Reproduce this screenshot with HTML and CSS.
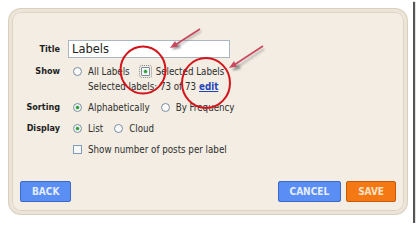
FILE: index.html
```html
<!DOCTYPE html>
<html>
<head>
<meta charset="utf-8">
<link rel="stylesheet" href="styles.css">
</head>
<body>
<div class="frame">
  <div class="panel">
    <div class="form">
      <div class="lbl lbl-title">Title</div>
      <div class="ctl"><div class="textbox">Labels</div></div>

      <div class="lbl">Show</div>
      <div class="ctl opts">
        <div class="line">
          <span class="opt"><span class="radio"></span>All Labels</span>
          <span class="opt"><span class="radio sq on"></span>Selected Labels</span>
        </div>
        <div class="line sub">Selected labels: 73 of 73 <a class="edit">edit</a></div>
      </div>

      <div class="lbl">Sorting</div>
      <div class="ctl opts">
        <div class="line">
          <span class="opt"><span class="radio on"></span>Alphabetically</span>
          <span class="opt"><span class="radio"></span>By Frequency</span>
        </div>
      </div>

      <div class="lbl">Display</div>
      <div class="ctl opts">
        <div class="line">
          <span class="opt"><span class="radio on"></span>List</span>
          <span class="opt"><span class="radio"></span>Cloud</span>
        </div>
      </div>

      <div class="lbl"></div>
      <div class="ctl opts">
        <div class="line">
          <span class="opt"><span class="check"></span>Show number of posts per label</span>
        </div>
      </div>
    </div>
    <div class="buttons">
      <span class="btn blue">BACK</span>
      <span class="spacer"></span>
      <span class="btn blue">CANCEL</span>
      <span class="btn orange">SAVE</span>
    </div>
  </div>
  <svg class="annot" width="420" height="228" viewBox="0 0 420 228">
    <defs>
      <filter id="sh" x="-50%" y="-50%" width="200%" height="200%">
        <feGaussianBlur stdDeviation="1"/>
      </filter>
    </defs>
    <g stroke="#777" stroke-width="2" fill="none" opacity="0.5" filter="url(#sh)">
      <line x1="201" y1="31" x2="173" y2="49"/>
      <line x1="264" y1="49" x2="233" y2="70"/>
    </g>
    <path d="M173 49 L178 42 L181 48 Z" fill="#666" opacity="0.6" filter="url(#sh)"/>
    <path d="M233 70 L238 63 L241 69 Z" fill="#666" opacity="0.6" filter="url(#sh)"/>
    <g stroke="#c9485e" stroke-width="1.6" fill="none">
      <line x1="200" y1="29" x2="175" y2="45"/>
      <line x1="263" y1="46" x2="234" y2="65"/>
    </g>
    <path d="M170 48 L175 41 L178 46.5 Z" fill="#c9485e"/>
    <path d="M229 68 L234 61 L237 66.5 Z" fill="#c9485e"/>
    <g stroke="#d4141c" stroke-width="2" fill="none">
      <ellipse cx="143" cy="70" rx="22.5" ry="23.5"/>
      <ellipse cx="206" cy="83" rx="24" ry="25"/>
    </g>
  </svg>
</div>
</body>
</html>
```
FILE: styles.css
```css
html, body {
  margin: 0;
  padding: 0;
  background: #ffffff;
}
.frame {
  position: relative;
  width: 413px;
  height: 223px;
  background: #ffffff;
  box-shadow: 2px 2px 1px #555;
  display: flex;
  padding: 9px 6px 9px 9px;
  box-sizing: border-box;
}
.panel {
  flex: 1;
  background: #f3ede3;
  border: 3px solid #ebe4d7;
  border-radius: 12px;
  box-shadow: 0 0 0 1px #d8cfbe, inset 0 0 0 1px #ddd4c4;
  padding: 28px 8px 9px 8px;
  display: flex;
  flex-direction: column;
  font-family: "DejaVu Sans Condensed", "DejaVu Sans", sans-serif;
  font-stretch: condensed;
  font-size: 9.7px;
  color: #2e2e2e;
}
.form {
  display: grid;
  grid-template-columns: 40px 1fr;
  column-gap: 8px;
  row-gap: 6px;
}
.lbl {
  text-align: right;
  font-weight: bold;
  font-size: 9px;
  color: #1e1e1e;
  line-height: 15px;
}
.lbl-title {
  line-height: 18px;
}
.ctl {
  min-width: 0;
}
.form .ctl:first-of-type {
  margin-bottom: 1px;
}
.textbox {
  width: 162px;
  height: 18px;
  box-sizing: border-box;
  border: 1px solid #a9b6c4;
  background: #fff;
  font-family: "DejaVu Sans", sans-serif;
  font-stretch: normal;
  font-size: 11.5px;
  color: #222;
  line-height: 16px;
  padding-left: 3px;
}
.opts {
  padding-left: 5px;
}
.line {
  height: 15px;
  line-height: 15px;
  display: flex;
  align-items: center;
  white-space: nowrap;
}
.opt {
  display: inline-flex;
  align-items: center;
  margin-right: 11px;
}
.sub {
  padding-left: 15px;
}
.edit {
  color: #1f45b8;
  font-weight: bold;
  text-decoration: underline;
  margin-left: 3px;
}
.radio {
  width: 9px;
  height: 9px;
  box-sizing: border-box;
  border: 1px solid #7a8c9e;
  border-radius: 50%;
  background: #fafafa;
  margin-right: 6px;
  display: inline-flex;
  align-items: center;
  justify-content: center;
}
.radio.sq {
  border-radius: 1px;
  outline: 1px dotted #888;
  outline-offset: 1px;
}
.radio.on::after {
  content: "";
  width: 3px;
  height: 3px;
  border-radius: 50%;
  background: #2f9a3a;
  box-shadow: 0 0 1px 0.5px #7dc488;
}
.check {
  width: 9px;
  height: 9px;
  box-sizing: border-box;
  border: 1px solid #7f9db9;
  background: #f8f8f8;
  margin-right: 6px;
}
.buttons {
  margin-top: auto;
  display: flex;
  gap: 5px;
  align-items: center;
}
.spacer {
  flex: 1;
}
.btn {
  height: 21px;
  box-sizing: border-box;
  padding: 0 11px;
  font-family: "DejaVu Sans", sans-serif;
  font-weight: bold;
  font-size: 10px;
  line-height: 19px;
  border-radius: 2px;
  display: inline-flex;
  align-items: center;
  justify-content: center;
}
.blue {
  background: #5a8ef4;
  border: 1px solid #3c68c8;
  color: #e4ecff;
}
.orange {
  background: #f47813;
  border: 1px solid #c75a04;
  color: #ffe3c6;
}
.annot {
  position: absolute;
  left: 0;
  top: 0;
  pointer-events: none;
}
```
